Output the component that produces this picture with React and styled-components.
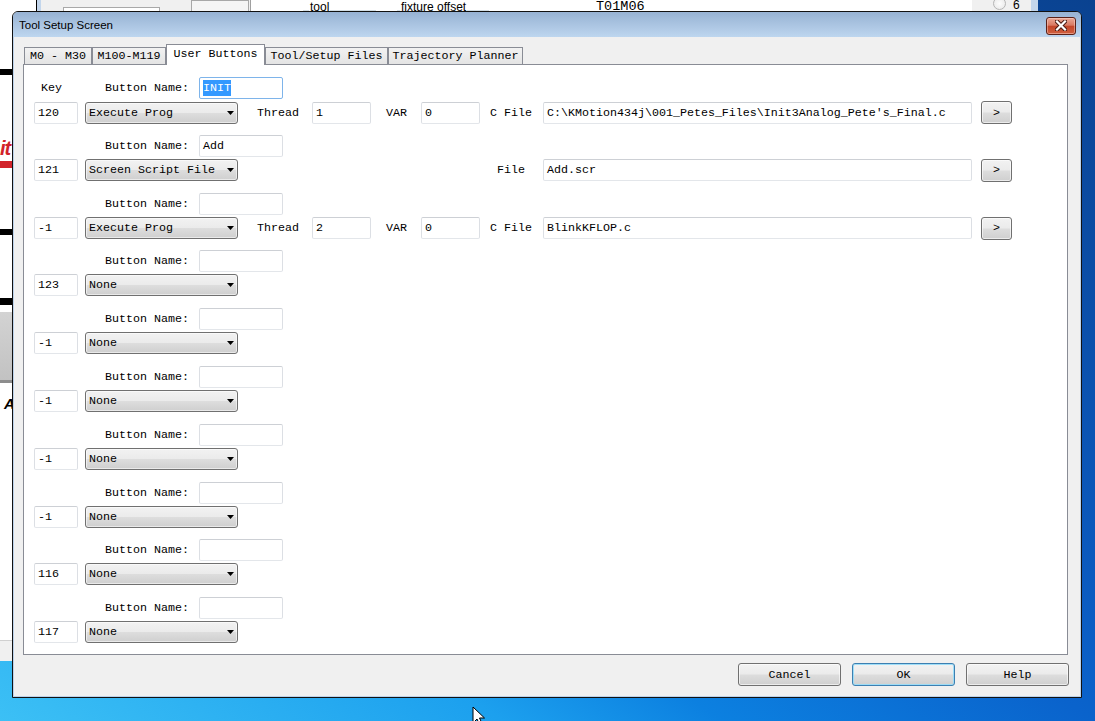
import React from "react"
import styled, { createGlobalStyle } from "styled-components"

const GlobalStyle = createGlobalStyle`
  html, body {
    margin: 0;
    padding: 0;
  }
  body {
    width: 1095px;
    height: 721px;
    overflow: hidden;
  }
`

const Desktop = styled.div`
  position: relative;
  width: 1095px;
  height: 721px;
  overflow: hidden;
  background: linear-gradient(
    to top right,
    #3cc0f5 0%,
    #1ca0ee 23%,
    #0c80e0 33%,
    #0a63cc 50%,
    #0a5abf 60%,
    #0a4290 100%
  );
`

/* ---------- background application window ---------- */

const AppWindow = styled.div`
  position: absolute;
  left: 0;
  top: 0;
  width: 1038px;
  height: 661px;
  display: flex;
  background: #f0f0f0;
  font-family: "Liberation Sans", Arial, sans-serif;
`

const LeftPane = styled.div`
  width: 36px;
  flex: none;
  display: flex;
  flex-direction: column;
  background: #fff;
  border-right: 1px solid #000;
`

const Bar = styled.div`
  flex: none;
  height: ${(p) => p.$h}px;
  margin-top: ${(p) => p.$mt}px;
  background: #000;
`

const Logo = styled.div`
  flex: none;
  height: 36px;
  margin-top: 62px;
  display: flex;
  flex-direction: column;
  overflow: hidden;
`

const LogoText = styled.div`
  font-size: 20px;
  line-height: 22px;
  font-weight: bold;
  font-style: italic;
  color: #d2232a;
  letter-spacing: -1px;
`

const LogoSwoosh = styled.div`
  height: 7px;
  margin-top: 2px;
  margin-left: -6px;
  background: #d2232a;
  border-radius: 0 0 10px 0;
  transform: skewX(-20deg);
`

const GrayBlock = styled.div`
  flex: none;
  height: 71px;
  margin-top: 7px;
  box-sizing: border-box;
  background: linear-gradient(#d3d3d3, #c2c2c2);
  border-bottom: 3px solid #8d8d8d;
`

const BigLetter = styled.div`
  flex: none;
  margin-top: 12px;
  height: 18px;
  padding-left: 4px;
  font-size: 15px;
  line-height: 18px;
  font-weight: bold;
  font-style: italic;
`

const PaneFill = styled.div`
  flex: 1;
`

const PaneFoot = styled.div`
  flex: none;
  height: 20px;
  background: #f0f0f0;
  border-top: 1px solid #d0d0d0;
`

const Frame = styled.div`
  width: ${(p) => p.$w}px;
  flex: none;
  background: #c3d6ec;
`

const AppMain = styled.div`
  flex: 1;
  display: flex;
  flex-direction: column;
`

const TopStrip = styled.div`
  height: 11px;
  display: flex;
  overflow: hidden;
`

const StripBox = styled.div`
  flex: none;
  box-sizing: border-box;
  width: ${(p) => p.$w}px;
  margin-left: ${(p) => p.$ml}px;
  margin-top: ${(p) => p.$mt || 0}px;
  background: ${(p) => p.$bg};
  border: 1px solid #a8a8a8;
  border-bottom: none;
`

const WhiteArea = styled.div`
  flex: none;
  width: 721px;
  margin-left: 1px;
  display: flex;
  align-items: flex-start;
  background: #fff;
  border-left: 1px solid #a0a0a0;
`

const GroupBox = styled.div`
  flex: none;
  width: ${(p) => p.$w}px;
  margin-left: ${(p) => p.$ml}px;
  height: 11px;
  display: flex;
  align-items: flex-start;
`

const GroupLine = styled.div`
  flex: ${(p) => (p.$grow ? 1 : "none")};
  width: ${(p) => p.$w || 6}px;
  height: 10px;
  border-bottom: 1px solid #d5dfe5;
`

const GroupLabel = styled.div`
  padding: 1px 1px 0;
  font-size: 12px;
  line-height: 12px;
`

const ToolCode = styled.div`
  margin-left: 107px;
  padding-top: 1px;
  font-family: "Liberation Mono", monospace;
  font-size: 13.5px;
  line-height: 12px;
`

const RadioArea = styled.div`
  flex: 1;
  display: flex;
  align-items: flex-start;
  padding-left: 21px;
  font-size: 12px;
`

const RadioDot = styled.div`
  width: 11px;
  height: 11px;
  margin-top: -3px;
  border-radius: 50%;
  border: 1px solid #b5b5b5;
  background: radial-gradient(#fdfdfd, #e6e6e6);
`

const RadioText = styled.div`
  margin-left: 7px;
  line-height: 11px;
`

/* ---------- dialog ---------- */

const Dialog = styled.div`
  position: absolute;
  left: 12px;
  top: 11px;
  width: 1070px;
  height: 687px;
  box-sizing: border-box;
  display: flex;
  flex-direction: column;
  border: 1px solid #111;
  border-radius: 6px 6px 0 0;
  background: #f0f0f0;
  box-shadow: inset 0 0 0 1px #bcd2ea;
  font-family: "Liberation Mono", "Courier New", monospace;
  font-size: 11.67px;
  color: #000;
`

const TitleBar = styled.div`
  flex: none;
  height: 25px;
  display: flex;
  align-items: center;
  justify-content: space-between;
  padding: 0 5px 0 6px;
  border-radius: 5px 5px 0 0;
  background: linear-gradient(#97b2d3, #bdd6ef);
  font-family: "Liberation Sans", Arial, sans-serif;
  font-size: 11.5px;
`

const CloseButton = styled.div`
  box-sizing: border-box;
  width: 30px;
  height: 18px;
  margin-top: 2px;
  display: flex;
  align-items: center;
  justify-content: center;
  border: 1px solid #5b2118;
  border-radius: 3px;
  background: linear-gradient(#eaa896 0%, #d97a63 45%, #c3462a 52%, #d0603f 100%);
  box-shadow: inset 0 0 0 1px rgba(255, 220, 210, 0.45);
`

const Body = styled.div`
  flex: 1;
  display: flex;
  flex-direction: column;
  padding: 7px 0 0 10px;
`

const TabRow = styled.div`
  flex: none;
  height: 20px;
  margin-left: 1px;
  display: flex;
  align-items: flex-end;
  position: relative;
  z-index: 1;
`

const Tab = styled.div`
  box-sizing: border-box;
  width: ${(p) => p.$w}px;
  height: ${(p) => (p.$active ? 21 : 17)}px;
  margin-bottom: ${(p) => (p.$active ? -1 : 0)}px;
  padding-bottom: ${(p) => (p.$active ? 3 : 0)}px;
  display: flex;
  align-items: center;
  justify-content: center;
  white-space: nowrap;
  border: 1px solid #898c95;
  border-bottom: none;
  background: ${(p) => (p.$active ? "#fff" : "linear-gradient(#f2f2f2, #e4e4e4)")};
`

const Panel = styled.div`
  flex: none;
  box-sizing: border-box;
  width: 1045px;
  height: 591px;
  padding: 12px 0 0 10px;
  background: #fff;
  border: 1px solid #898c95;
`

const Group = styled.div`
  height: 57.8px;
  display: flex;
  flex-direction: column;
  gap: 2px;
`

const NameRow = styled.div`
  height: 22px;
  display: flex;
  align-items: center;
`

const KeyLabel = styled.div`
  box-sizing: border-box;
  width: 71px;
  padding-left: 7px;
`

const NameLabel = styled.div`
  width: 94px;
  white-space: nowrap;
`

const MainRow = styled.div`
  height: 22px;
  display: grid;
  grid-template-columns: 51px 172px 55px 74px 35px 69px 53px 438px 31px;
  align-items: center;
`

const Label = styled.div`
  white-space: nowrap;
  width: ${(p) => (p.$w ? `${p.$w}px` : "auto")};
  text-align: ${(p) => (p.$center ? "center" : "left")};
`

const TextBox = styled.div`
  box-sizing: border-box;
  width: ${(p) => p.$w}px;
  height: 22px;
  padding: 0 3px;
  display: flex;
  align-items: center;
  overflow: hidden;
  white-space: nowrap;
  background: #fff;
  border: 1px solid;
  border-color: ${(p) =>
    p.$focus ? "#7eb4ea" : "#cdd0d5 #dcdfe4 #e3e6ea #dcdfe4"};
  border-radius: 2px;
`

const Selected = styled.span`
  background: #3399ff;
  color: #fff;
  line-height: 16px;
`

const Combo = styled.div`
  box-sizing: border-box;
  width: 153px;
  height: 22px;
  padding: 0 3px;
  display: flex;
  align-items: center;
  justify-content: space-between;
  white-space: nowrap;
  border: 1px solid #707070;
  border-radius: 3px;
  background: linear-gradient(#f2f2f2 0%, #ebebeb 48%, #dddddd 52%, #cfcfcf 100%);
  box-shadow: inset 0 0 0 1px rgba(255, 255, 255, 0.55);
`

const PushButton = styled.div`
  box-sizing: border-box;
  width: ${(p) => p.$w}px;
  height: ${(p) => p.$h}px;
  display: flex;
  align-items: center;
  justify-content: center;
  border: 1px solid ${(p) => (p.$default ? "#3c7fb1" : "#707070")};
  border-radius: 3px;
  background: linear-gradient(#f2f2f2 0%, #ebebeb 48%, #dddddd 52%, #cfcfcf 100%);
  box-shadow: inset 0 0 0 1px
    ${(p) => (p.$default ? "rgba(150, 220, 248, 0.9)" : "rgba(255, 255, 255, 0.6)")};
`

const Footer = styled.div`
  flex: none;
  width: 1046px;
  margin-top: 8px;
  display: flex;
  justify-content: flex-end;
  gap: 11px;
`

const Cursor = styled.svg`
  position: absolute;
  left: 472px;
  top: 706px;
`

const rows = [
  {
    key: "120",
    name: "INIT",
    focus: true,
    mode: "Execute Prog",
    thread: "1",
    v: "0",
    fileLabel: "C File",
    file: "C:\\KMotion434j\\001_Petes_Files\\Init3Analog_Pete's_Final.c",
  },
  { key: "121", name: "Add", mode: "Screen Script File", fileLabel: "File", file: "Add.scr" },
  {
    key: "-1",
    name: "",
    mode: "Execute Prog",
    thread: "2",
    v: "0",
    fileLabel: "C File",
    file: "BlinkKFLOP.c",
  },
  { key: "123", mode: "None" },
  { key: "-1", mode: "None" },
  { key: "-1", mode: "None" },
  { key: "-1", mode: "None" },
  { key: "-1", mode: "None" },
  { key: "116", mode: "None" },
  { key: "117", mode: "None" },
]

const tabs = [
  { label: "M0 - M30", w: 68 },
  { label: "M100-M119", w: 74 },
  { label: "User Buttons", w: 99, active: true },
  { label: "Tool/Setup Files", w: 123 },
  { label: "Trajectory Planner", w: 135 },
]

const Arrow = () => (
  <svg width="7" height="4" viewBox="0 0 7 4">
    <polygon points="0,0 7,0 3.5,4" fill="#000" />
  </svg>
)

const ButtonRow = ({ row, first }) => {
  const isProg = row.mode === "Execute Prog"
  const hasFile = row.mode !== "None"
  return (
    <Group>
      <NameRow>
        <KeyLabel>{first ? "Key" : ""}</KeyLabel>
        <NameLabel>Button Name:</NameLabel>
        <TextBox $w={84} $focus={row.focus}>
          {row.focus ? <Selected>{row.name}</Selected> : row.name}
        </TextBox>
      </NameRow>
      <MainRow>
        <TextBox $w={44}>{row.key}</TextBox>
        <Combo>
          <span>{row.mode}</span>
          <Arrow />
        </Combo>
        {isProg ? <Label>Thread</Label> : <span />}
        {isProg ? <TextBox $w={59}>{row.thread}</TextBox> : <span />}
        {isProg ? <Label>VAR</Label> : <span />}
        {isProg ? <TextBox $w={59}>{row.v}</TextBox> : <span />}
        {hasFile ? (
          <Label $w={42} $center>
            {row.fileLabel}
          </Label>
        ) : (
          <span />
        )}
        {hasFile ? <TextBox $w={429}>{row.file}</TextBox> : <span />}
        {hasFile ? (
          <PushButton $w={31} $h={23}>
            &gt;
          </PushButton>
        ) : (
          <span />
        )}
      </MainRow>
    </Group>
  )
}

const App = () => {
  return (
    <Desktop>
      <GlobalStyle />
      <AppWindow>
        <LeftPane>
          <Bar $h={6} $mt={69} />
          <Logo>
            <LogoText>it</LogoText>
            <LogoSwoosh />
          </Logo>
          <Bar $h={6} $mt={56} />
          <Bar $h={7} $mt={63} />
          <GrayBlock />
          <BigLetter>A</BigLetter>
          <PaneFill />
          <PaneFoot />
        </LeftPane>
        <Frame $w={4} />
        <AppMain>
          <TopStrip>
            <StripBox $w={97} $ml={22} $mt={7} $bg="#fff" />
            <StripBox $w={58} $ml={31} $bg="#f5f5f5" />
            <WhiteArea>
              <GroupBox $w={73} $ml={52}>
                <GroupLine />
                <GroupLabel>tool</GroupLabel>
                <GroupLine $grow />
              </GroupBox>
              <GroupBox $w={92} $ml={21}>
                <GroupLine $w={3} />
                <GroupLabel>fixture offset</GroupLabel>
                <GroupLine $grow />
              </GroupBox>
              <ToolCode>T01M06</ToolCode>
            </WhiteArea>
            <RadioArea>
              <RadioDot />
              <RadioText>6</RadioText>
            </RadioArea>
          </TopStrip>
        </AppMain>
        <Frame $w={7} />
      </AppWindow>

      <Dialog>
        <TitleBar>
          <span>Tool Setup Screen</span>
          <CloseButton>
            <svg width="12" height="11" viewBox="0 0 12 11">
              <path d="M2 1.5 L10 9.5 M10 1.5 L2 9.5" stroke="#4a1a12" strokeWidth="4.2" strokeLinecap="square" />
              <path d="M2 1.5 L10 9.5 M10 1.5 L2 9.5" stroke="#fff" strokeWidth="2.2" strokeLinecap="square" />
            </svg>
          </CloseButton>
        </TitleBar>
        <Body>
          <TabRow>
            {tabs.map((t) => (
              <Tab key={t.label} $w={t.w} $active={t.active}>
                {t.label}
              </Tab>
            ))}
          </TabRow>
          <Panel>
            {rows.map((r, i) => (
              <ButtonRow key={i} row={r} first={i === 0} />
            ))}
          </Panel>
          <Footer>
            <PushButton $w={103} $h={23}>
              Cancel
            </PushButton>
            <PushButton $w={103} $h={23} $default>
              OK
            </PushButton>
            <PushButton $w={103} $h={23}>
              Help
            </PushButton>
          </Footer>
        </Body>
      </Dialog>

      <Cursor width="13" height="20" viewBox="0 0 13 20">
        <path d="M1 1 L1 17 L5 13 L8 19.5 L10.5 18.5 L7.5 12 L12.5 12 Z" fill="#fff" stroke="#000" strokeWidth="1" />
      </Cursor>
    </Desktop>
  )
}

export default App
